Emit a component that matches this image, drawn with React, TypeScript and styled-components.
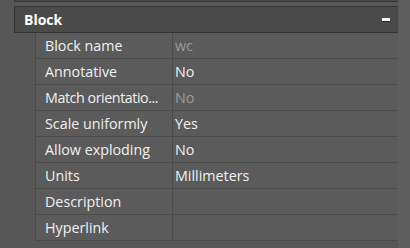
import React from 'react';
import styled, { createGlobalStyle } from 'styled-components';

const GlobalStyle = createGlobalStyle`
    body{
        margin: 0;
        background-color: #575757;
        font-family: "Open Sans", "Noto Sans", sans-serif;
    }
`

const Layout = styled.div`
    display: flex;
    width: 410px;
    height: 248px;
    overflow: hidden;
`

const Main = styled.div`
    width: 398px;
    padding-left: 14px;
    box-sizing: border-box;
    display: flex;
    flex-direction: column;
`

const Track = styled.div`
    flex: 1;
    background-color: #5e5e5e;
`

const PrevSection = styled.div`
    background-color: #4b4b4b;
    border: 1px solid #333;
    border-top: none;
    width: 385px;
    box-sizing: border-box;
    height: 2px;
`

const Header = styled.div`
    margin-top: 4px;
    width: 385px;
    height: 27px;
    box-sizing: border-box;
    border: 1px solid #333;
    background-color: #4a4a4a;
    display: flex;
    align-items: center;
    justify-content: space-between;
    padding: 0 8px 0 9px;
    color: #fff;
    font-weight: 700;
    font-size: 14px;
`

const Collapse = styled.span`
    width: 8px;
    height: 3px;
    background-color: #f2f2f2;
    box-shadow: 0 1px 0 #2a2a2a;
    margin-bottom: 1px;
`

const Table = styled.div`
    margin-left: 21px;
    width: 364px;
    box-sizing: border-box;
    border-left: 1px solid #4b4b4b;
    border-right: 1px solid #4b4b4b;
    background-color: #5b5b5b;
`

const Row = styled.div`
    display: grid;
    grid-template-columns: 137px 1fr;
    height: 26px;
    box-sizing: border-box;
    border-bottom: 1px solid #4b4b4b;
`

const Label = styled.div<{ $tight?: boolean }>`
    border-right: 1px solid #4b4b4b;
    padding-left: 9px;
    display: flex;
    align-items: center;
    color: #f0f0f0;
    font-size: 14.3px;
    letter-spacing: ${p => p.$tight ? '-0.45px' : 'normal'};
    white-space: nowrap;
    overflow: hidden;
`

const Value = styled.div<{ $muted?: boolean }>`
    padding-left: 2px;
    display: flex;
    align-items: center;
    color: ${p => p.$muted ? '#9c9c9c' : '#f0f0f0'};
    font-size: 14.3px;
    white-space: nowrap;
`

const rows: { label: string, value: string, muted?: boolean, tight?: boolean }[] = [
    { label: 'Block name', value: 'wc', muted: true },
    { label: 'Annotative', value: 'No' },
    { label: 'Match orientatio...', value: 'No', muted: true, tight: true },
    { label: 'Scale uniformly', value: 'Yes' },
    { label: 'Allow exploding', value: 'No' },
    { label: 'Units', value: 'Millimeters' },
    { label: 'Description', value: '' },
    { label: 'Hyperlink', value: '' },
]

export default function App(){
    return(
        <Layout>
            <GlobalStyle />
            <Main>
                <PrevSection />
                <Header>
                    <span>Block</span>
                    <Collapse />
                </Header>
                <Table>
                    {rows.map(r => (
                        <Row key={r.label}>
                            <Label $tight={r.tight}>{r.label}</Label>
                            <Value $muted={r.muted}>{r.value}</Value>
                        </Row>
                    ))}
                </Table>
            </Main>
            <Track />
        </Layout>
    )
}
